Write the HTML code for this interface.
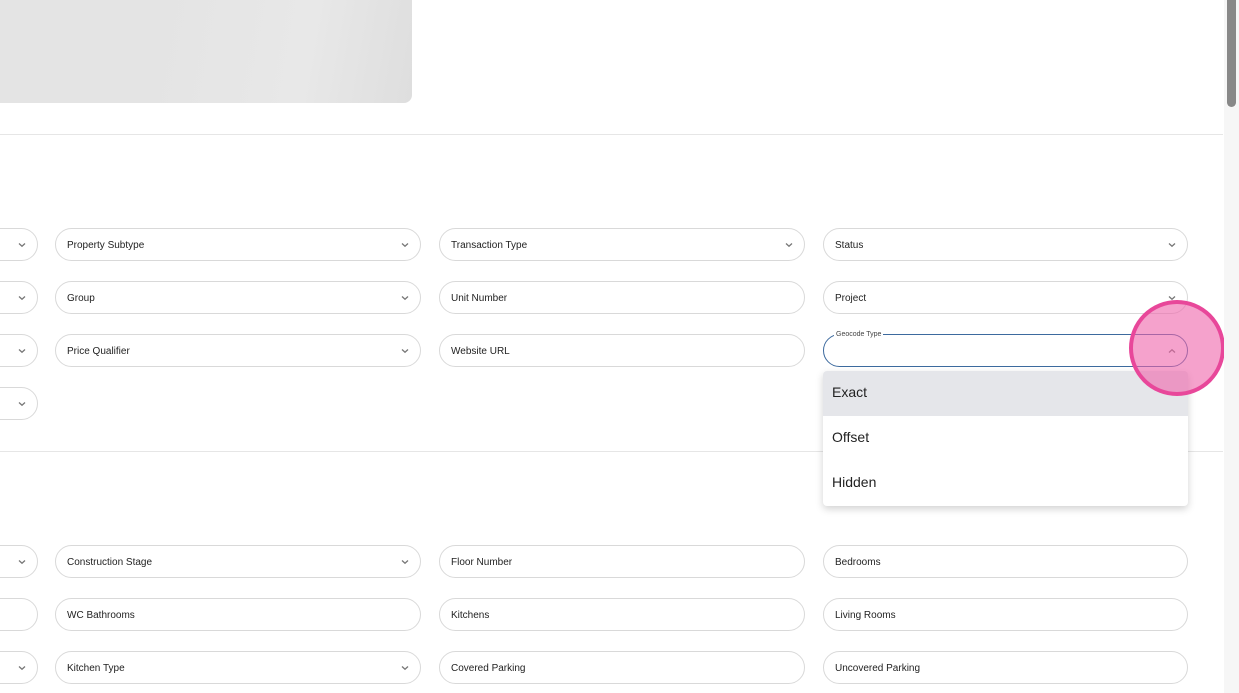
<!DOCTYPE html>
<html><head><meta charset="utf-8"><style>
*{margin:0;padding:0;box-sizing:border-box}
body{width:1239px;height:693px;overflow:hidden;background:#fff;position:relative;font-family:"Liberation Sans",Arial,sans-serif;color:#222}
.img{position:absolute;left:-20px;top:-20px;width:432px;height:123px;border-radius:0 0 8px 0;background:linear-gradient(100deg,#e4e4e4 40%,#e8e8e8 75%,#dedede 100%)}
.hr{position:absolute;left:0;width:1223px;height:1px;background:#e6e6e6}
.f{position:absolute;height:33px;border:1px solid #d9d9d9;border-radius:17px;background:#fff;font-size:10px;line-height:33px;padding-left:11px;color:#222}
.f svg{position:absolute;right:10px;top:13px}
.c0{left:-40px;width:78px}
.c1{left:55px;width:366px}
.c2{left:439px;width:366px}
.c3{left:823px;width:365px}
.sb{position:absolute;left:1224px;top:0;width:15px;height:693px;background:#f6f6f6}
.th{position:absolute;left:1227px;top:0;width:9px;height:107px;background:#888;border-radius:0 0 5px 5px}
.menu{position:absolute;left:823px;top:371px;width:365px;height:135px;background:#fff;border-radius:4px;box-shadow:0 3px 8px rgba(0,0,0,.18);font-size:14px}
.menu div{height:45px;line-height:43px;padding-left:9px;color:#222}
</style></head><body>
<div class="img"></div>
<div class="hr" style="top:134px"></div>
<div class="hr" style="top:451px"></div>

<div class="f c0" style="top:228px"><svg width="10" height="6"><path d="M2 1.5L5 4.2L8 1.5" fill="none" stroke="#777" stroke-width="1.3"/></svg></div>
<div class="f c1" style="top:228px">Property Subtype<svg width="10" height="6"><path d="M2 1.5L5 4.2L8 1.5" fill="none" stroke="#777" stroke-width="1.3"/></svg></div>
<div class="f c2" style="top:228px">Transaction Type<svg width="10" height="6"><path d="M2 1.5L5 4.2L8 1.5" fill="none" stroke="#777" stroke-width="1.3"/></svg></div>
<div class="f c3" style="top:228px">Status<svg width="10" height="6"><path d="M2 1.5L5 4.2L8 1.5" fill="none" stroke="#777" stroke-width="1.3"/></svg></div>

<div class="f c0" style="top:281px"><svg width="10" height="6"><path d="M2 1.5L5 4.2L8 1.5" fill="none" stroke="#777" stroke-width="1.3"/></svg></div>
<div class="f c1" style="top:281px">Group<svg width="10" height="6"><path d="M2 1.5L5 4.2L8 1.5" fill="none" stroke="#777" stroke-width="1.3"/></svg></div>
<div class="f c2" style="top:281px">Unit Number</div>
<div class="f c3" style="top:281px">Project<svg width="10" height="6"><path d="M2 1.5L5 4.2L8 1.5" fill="none" stroke="#777" stroke-width="1.3"/></svg></div>

<div class="f c0" style="top:334px"><svg width="10" height="6"><path d="M2 1.5L5 4.2L8 1.5" fill="none" stroke="#777" stroke-width="1.3"/></svg></div>
<div class="f c1" style="top:334px">Price Qualifier<svg width="10" height="6"><path d="M2 1.5L5 4.2L8 1.5" fill="none" stroke="#777" stroke-width="1.3"/></svg></div>
<div class="f c2" style="top:334px">Website URL</div>
<div class="f c3" style="top:334px;border-color:#3d6a9e"><span style="position:absolute;left:10px;top:-5px;font-size:7px;line-height:9px;background:#fff;padding:0 2px;color:#444">Geocode Type</span><svg width="10" height="6"><path d="M2 4.5L5 1.8L8 4.5" fill="none" stroke="#777" stroke-width="1.3"/></svg></div>

<div class="f c0" style="top:387px"><svg width="10" height="6"><path d="M2 1.5L5 4.2L8 1.5" fill="none" stroke="#777" stroke-width="1.3"/></svg></div>

<div class="f c0" style="top:545px"><svg width="10" height="6"><path d="M2 1.5L5 4.2L8 1.5" fill="none" stroke="#777" stroke-width="1.3"/></svg></div>
<div class="f c1" style="top:545px">Construction Stage<svg width="10" height="6"><path d="M2 1.5L5 4.2L8 1.5" fill="none" stroke="#777" stroke-width="1.3"/></svg></div>
<div class="f c2" style="top:545px">Floor Number</div>
<div class="f c3" style="top:545px">Bedrooms</div>

<div class="f c0" style="top:598px"></div>
<div class="f c1" style="top:598px">WC Bathrooms</div>
<div class="f c2" style="top:598px">Kitchens</div>
<div class="f c3" style="top:598px">Living Rooms</div>

<div class="f c0" style="top:651px"><svg width="10" height="6"><path d="M2 1.5L5 4.2L8 1.5" fill="none" stroke="#777" stroke-width="1.3"/></svg></div>
<div class="f c1" style="top:651px">Kitchen Type<svg width="10" height="6"><path d="M2 1.5L5 4.2L8 1.5" fill="none" stroke="#777" stroke-width="1.3"/></svg></div>
<div class="f c2" style="top:651px">Covered Parking</div>
<div class="f c3" style="top:651px">Uncovered Parking</div>

<div class="menu">
<div style="background:#e5e6ea;border-radius:4px 4px 0 0">Exact</div>
<div>Offset</div>
<div>Hidden</div>
</div>

<div style="position:absolute;left:1129px;top:300px;width:96px;height:96px;border-radius:50%;background:rgba(238,100,170,.6);border:4px solid #e8479a"></div>

<div class="sb"></div><div class="th"></div>
</body></html>
